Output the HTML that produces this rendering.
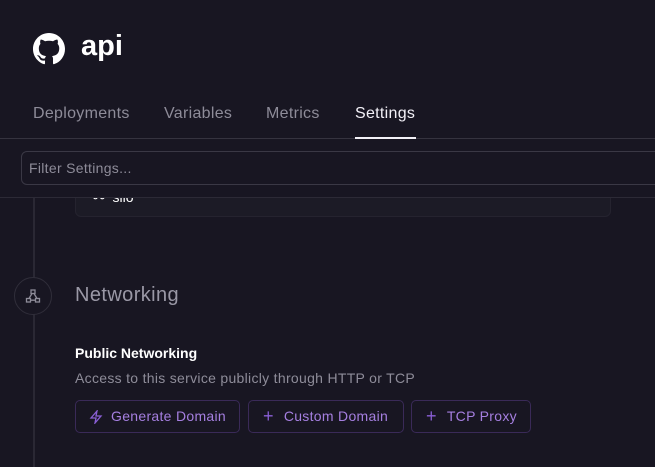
<!DOCTYPE html>
<html><head><style>
body{margin:0;width:655px;height:467px;background:#181622;font-family:"Liberation Sans",sans-serif;overflow:hidden;position:relative;color:#e8e6ef}
.a{position:absolute}
.tab{position:absolute;top:105px;font-size:16px;letter-spacing:0.3px;color:#8e8c99}
.btn{position:absolute;top:400px;height:33px;border:1px solid #3a2a58;border-radius:5px;box-sizing:border-box;color:#a57fe0;font-size:14px;letter-spacing:0.3px;line-height:31px;display:flex;align-items:center}
</style></head><body>
<svg class="a" style="left:33px;top:33px" width="32" height="32" viewBox="0 0 16 16"><path fill="#fff" d="M8 0C3.58 0 0 3.58 0 8c0 3.54 2.29 6.53 5.47 7.59.4.07.55-.17.55-.38 0-.19-.01-.82-.01-1.49-2.01.37-2.53-.49-2.69-.94-.09-.23-.48-.94-.82-1.13-.28-.15-.68-.52-.01-.53.63-.01 1.08.58 1.23.82.72 1.21 1.870.87 2.33.66.07-.52.28-.87.51-1.07-1.78-.2-3.64-.89-3.64-3.95 0-.87.31-1.59.82-2.15-.08-.2-.36-1.02.08-2.12 0 0 .67-.21 2.2.82.64-.18 1.32-.27 2-.27.68 0 1.36.09 2 .27 1.53-1.04 2.2-.82 2.2-.82.44 1.1.16 1.92.08 2.12.51.56.82 1.27.82 2.15 0 3.07-1.87 3.75-3.65 3.95.29.25.54.73.54 1.48 0 1.07-.01 1.93-.01 2.2 0 .21.15.46.55.38A8.013 8.013 0 0016 8c0-4.42-3.58-8-8-8z"/></svg>
<div class="a" style="left:81px;top:30px;font-size:29px;font-weight:bold;color:#fff">api</div>
<div class="tab" style="left:33px">Deployments</div>
<div class="tab" style="left:164px">Variables</div>
<div class="tab" style="left:266px">Metrics</div>
<div class="tab" style="left:355px;color:#f2f0f7">Settings</div>
<div class="a" style="left:0;top:138px;width:655px;height:1px;background:#35333f"></div>
<div class="a" style="left:355px;top:137px;width:61px;height:2px;background:#f2f0f7"></div>
<div class="a" style="left:75px;top:170px;width:536px;height:47px;background:#1c1b26;border:1px solid #25232f;border-radius:6px;box-sizing:border-box"></div>
<div class="a" style="left:93px;top:189px;font-size:14px;color:#fff">⚯ &nbsp;silo</div>
<div class="a" style="left:0;top:139px;width:655px;height:58px;background:#181622;border-bottom:1px solid #2c2a36"></div>
<div class="a" style="left:21px;top:151px;width:660px;height:34px;border:1px solid #3a3845;border-radius:6px;box-sizing:border-box;font-size:14px;letter-spacing:0.3px;color:#8e8c99;line-height:32px;padding-left:7px">Filter Settings...</div>
<div class="a" style="left:33px;top:198px;width:2px;height:269px;background:#2a2834"></div>
<div class="a" style="left:14px;top:277px;width:38px;height:38px;border-radius:50%;border:1px solid #302e3a;background:#181622;box-sizing:border-box"></div>
<svg class="a" style="left:25px;top:288px" width="16" height="16" viewBox="0 0 16 16" fill="none" stroke="#8e8c99" stroke-width="1.3"><rect x="6" y="2" width="4" height="3.5"/><rect x="1.5" y="10.5" width="4" height="3.5"/><rect x="10.5" y="10.5" width="4" height="3.5"/><path d="M7 5.5L4 10.5M9 5.5L12 10.5M5.5 12.2h5"/></svg>
<div class="a" style="left:75px;top:284px;font-size:20px;letter-spacing:0.4px;color:#9a98a6">Networking</div>
<div class="a" style="left:75px;top:345px;font-size:14px;font-weight:bold;color:#fff">Public Networking</div>
<div class="a" style="left:75px;top:370px;font-size:14px;letter-spacing:0.3px;color:#8e8c99">Access to this service publicly through HTTP or TCP</div>
<div class="btn" style="left:75px;width:165px"><svg style="margin:0 8px 0 13px" width="14" height="14" viewBox="0 0 14 14" fill="none" stroke="#8a5fd6" stroke-width="1.3"><path d="M8 1L2 8h5l-1 5 6-7H7z"/></svg>Generate Domain</div>
<div class="btn" style="left:248px;width:156px"><span style="margin:0 10px 0 14px;font-size:18px;color:#8a5fd6">+</span>Custom Domain</div>
<div class="btn" style="left:411px;width:120px"><span style="margin:0 10px 0 14px;font-size:18px;color:#8a5fd6">+</span>TCP Proxy</div>
</body></html>
